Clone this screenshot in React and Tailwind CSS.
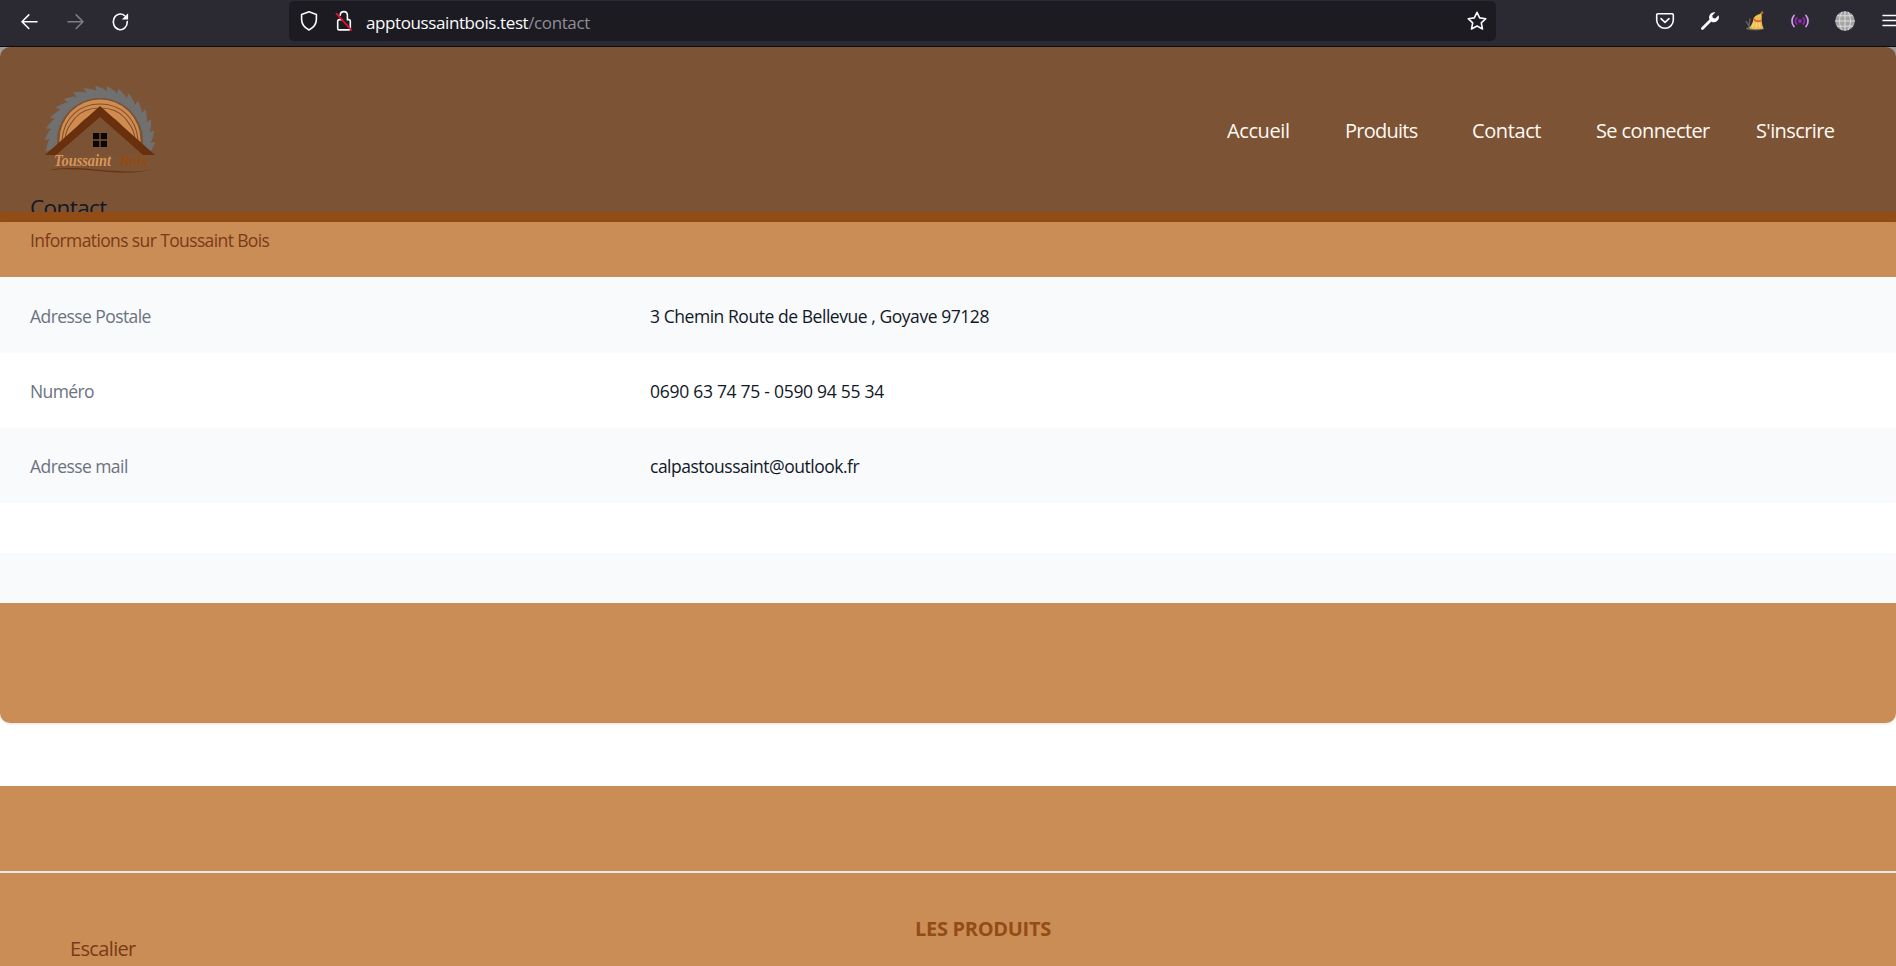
const font = "font-['Open_Sans','Noto_Sans',sans-serif]";

function BrowserBar() {
  return (
    <div className="flex h-[47px] shrink-0 items-start overflow-hidden border-b border-[#0c0c0d] bg-[#2b2a33]">
      <div className="flex w-[289px] shrink-0 items-center gap-[25px] pt-[12px] pl-[20px]">
        <svg width="20" height="20" viewBox="0 0 20 20" fill="none" stroke="#fbfbfe" strokeWidth="1.6" strokeLinecap="round" strokeLinejoin="round"><path d="M17.500 9.700h-15M9.300 2.900 2.500 9.700l6.800 6.800" transform="translate(-0.500 0)" /></svg>
        <svg width="20" height="20" viewBox="0 0 20 20" fill="none" stroke="#7f7e84" strokeWidth="1.6" strokeLinecap="round" strokeLinejoin="round"><path d="M11.200 2.900 18 9.700l-6.800 6.800M18 9.700H3" /></svg>
        <svg width="20" height="20" viewBox="0 0 20 20" fill="none" stroke="#fbfbfe" strokeWidth="1.6" strokeLinecap="round"><path d="M14.600 3.700A7 7.800 0 1 0 17.300 9.600" /><path d="M18.100 1.200v6.300h-6.300z" fill="#fbfbfe" stroke="none" /></svg>
      </div>
      <div className="mt-px flex h-[40px] w-[1207px] shrink-0 items-center rounded-[5px] bg-[#1c1b22] pr-[9px] pl-[10px]">
        <svg width="20" height="22" viewBox="0 0 20 22" fill="none" stroke="#fbfbfe" strokeWidth="1.6" strokeLinejoin="round"><path d="M10 1.8 17.4 4.6v4.600c0 4.300-2.700 8.300-7.400 10.800C5.300 17.500 2.600 13.500 2.600 9.200V4.600z" /></svg>
        <svg className="ml-[15px]" width="20" height="22" viewBox="0 0 20 22" fill="none" stroke="#fbfbfe" strokeWidth="1.6" strokeLinecap="round"><path d="M6.200 5.200C6.600 .4 13.400 .4 13.400 5.600V9.600h1.300a1.600 1.600 0 0 1 1.600 1.600v7.200a1.500 1.500 0 0 1-1.500 1.500H5.200a1.500 1.500 0 0 1-1.500-1.500v-7.200A1.600 1.600 0 0 1 5.300 9.600h2.500" /><path d="M2.500 3.600 17.300 20" stroke="#e8112d" strokeWidth="1.800" /></svg>
        <span className="mt-[3px] ml-[12px] text-[17px] leading-[24px] tracking-[-0.4px] whitespace-nowrap text-[#fbfbfe]">apptoussaintbois.test<span className="text-[#8f8e95]">/contact</span></span>
        <svg className="ml-auto" width="20" height="20" viewBox="0 0 20 20" fill="none" stroke="#fbfbfe" strokeWidth="1.600" strokeLinejoin="round"><path d="M10 1.300l2.700 5.600 6.100.8-4.500 4.200 1.200 6.100-5.500-3-5.500 3 1.200-6.100L1.200 7.700l6.100-.8z" /></svg>
      </div>
      <div className="flex shrink-0 items-center gap-[25px] pt-[11px] pl-[159px]">
        <svg width="20" height="20" viewBox="0 0 20 20" fill="none" stroke="#fbfbfe" strokeWidth="1.600" strokeLinecap="round" strokeLinejoin="round"><path d="M2.800 2.800h14.400a1.100 1.100 0 0 1 1.100 1.100V9a8.300 8.300 0 0 1-16.600 0V3.900a1.100 1.100 0 0 1 1.100-1.100zM6 7.600l4 3.800 4-3.800" /></svg>
        <svg width="20" height="20" viewBox="0 0 20 20"><path d="M2.400 17.500 11.400 8.500" stroke="#fbfbfe" strokeWidth="2.800" strokeLinecap="round" /><path d="M14.600 1.200a5.300 5.300 0 0 0-5.200 7.100l2.500 2.700a5.300 5.300 0 0 0 6.700-6.800l-3.300 3.200-2.500-.5-.5-2.500 3.200-3.100z" fill="#fbfbfe" /></svg>
        <svg width="20" height="20" viewBox="0 0 20 20"><ellipse cx="10" cy="17.500" rx="9" ry="1.800" fill="#6b6963" /><path d="M1 10l4 7M5 7.500 4 16" stroke="#59645b" strokeWidth="1.500" /><path d="M17.800.6 14.500 5" stroke="#b97a22" strokeWidth="2" /><path d="M16 2.800c-3 .2-6 2-7.500 4.700C8 11.500 6.500 14.500 4 17c4 1.600 10 1.500 14.500.5-1.700-4-2.200-8-1.700-12.500z" fill="#f0bd4f" /><path d="M8.500 8c2 2.300 4.800 2.800 7.800 1.500" stroke="#e5533c" strokeWidth="1.700" fill="none" /><path d="M9 12l-1.500 4M11.500 12v4M14 12l1 4" stroke="#fbe08b" strokeWidth="1" /></svg>
        <svg width="20" height="20" viewBox="0 0 20 20" fill="none" strokeWidth="1.700" strokeLinecap="round"><circle cx="10" cy="10" r="1.900" fill="#a31fc0" /><path d="M6.700 7a4.600 4.600 0 0 0 0 6M13.300 7a4.600 4.600 0 0 1 0 6" stroke="#8e2bb0" /><path d="M4 4.500a8.500 8.500 0 0 0 0 11M16 4.500a8.500 8.500 0 0 1 0 11" stroke="#d79aea" /></svg>
        <svg width="20" height="20" viewBox="0 0 20 20"><circle cx="10" cy="10" r="9.800" fill="#a3a3a3" /><path d="M10 0v20M0 10h20M2 4.800h16M2 15.200h16M7 .8C3.800 6 3.800 14 7 19.200M13 .8c3.200 5.200 3.200 13.200 0 18.400" fill="none" stroke="#dedede" strokeWidth="1" /></svg>
        <svg className="ml-[2px]" width="20" height="20" viewBox="0 0 20 20" stroke="#fbfbfe" strokeWidth="1.500" strokeLinecap="round"><path d="M1 4.500h18M1 9.500h18M1 14.500h18" /></svg>
      </div>
    </div>
  );
}

const teeth = Array.from({ length: 17 }, (_, i) => {
  const point = (deg, r) => {
    const a = (deg * Math.PI) / 180;
    return `${(55 + r * Math.cos(a)).toFixed(1)},${(55 - r * Math.sin(a)).toFixed(1)}`;
  };
  const start = 190 - i * 12;
  return `${point(start, 50)} ${point(start + 1, 55.5)} ${point(start - 3, 54)} ${point(start - 9, 52)}`;
}).join(" ");

function Logo() {
  return (
    <svg className="overflow-visible" width="112" height="92" viewBox="0 -2 112 92">
      <polygon points={`${teeth} 103,64 55,35 7,64`} fill="#707070" />
      <path d="M12 55a43 43 0 0 1 86 0v6L55 26 12 61z" fill="#7b5233" />
      <path d="M14.500 57V54a40.500 40.500 0 0 1 81 0v3L55 22z" fill="#d08c50" />
      <g fill="none" stroke="#82502b" strokeWidth="1.100">
        <path d="M17 54C19 31 35 18 55 18s36 13 38 36" />
        <path d="M20 53c1-11 6-15 10-21 7-8 15-10 25-10s18 2 25 10c4 6 9 10 10 21" />
        <path d="M32 42c5-7 12-12 21-15M78 42c-5-7-12-12-21-15" />
      </g>
      <path d="M55 29 11 69h87z" fill="#7b5233" />
      <path d="M55 20 0 69h11l44-38 43 38h12z" fill="#69300e" />
      <path d="M48 47h6.300v6.300H48zM55.700 47H62v6.300h-6.300zM48 54.700h6.300V61H48zM55.700 54.700H62V61h-6.300z" fill="#080706" />
      <text x="9" y="80" textLength="57" lengthAdjust="spacingAndGlyphs" className="font-['Liberation_Serif',serif] text-[17px] font-bold italic" fill="#d9955a">Toussaint</text>
      <text x="75" y="80" textLength="27" lengthAdjust="spacingAndGlyphs" className="font-['Liberation_Serif',serif] text-[17px] font-bold italic" fill="#934b12">Bois</text>
      <path d="M3 84.500c18-5 43-1 60 0 17 1 30 2 43-1-14 4-29 3.500-43 2.500-20-2-42-4-60-1.500z" fill="#69350f" />
    </svg>
  );
}

const links = [
  ["Accueil", "w-[118px]", "tracking-[-0.4px]"],
  ["Produits", "w-[127px]", "tracking-[-0.75px]"],
  ["Contact", "w-[124px]", "tracking-[-0.4px]"],
  ["Se connecter", "w-[160px]", "tracking-[-0.6px]"],
  ["S'inscrire", "w-[79px]", "tracking-[-0.6px]"],
];

function Header() {
  return (
    <header className="flex h-[175px] flex-col overflow-hidden rounded-t-[10px] border-b-[10px] border-[#924c15] bg-[#7c5334]">
      <div className="flex h-[146px] shrink-0 items-start justify-between pt-[37px] pl-[45px]">
        <Logo />
        <nav className="mt-[31px] flex w-[669px] text-[20px] leading-[32px] whitespace-nowrap text-[#fffaf5]">
          {links.map(([label, width, tracking]) => (
            <a key={label} className={`${width} ${tracking} shrink-0`}>{label}</a>
          ))}
        </nav>
      </div>
      <h3 className="ml-[30px] text-[22.500px] leading-[30px] tracking-[-0.6px] text-[#111827]">Contact</h3>
    </header>
  );
}

const rows = [
  ["Adresse Postale", "3 Chemin Route de Bellevue , Goyave 97128", "bg-[#f9fafb] h-[76px] pt-[27px]", "tracking-[-0.57px]", "tracking-[-0.45px]"],
  ["Numéro", "0690 63 74 75 - 0590 94 55 34", "bg-white h-[75px] pt-[26px]", "tracking-[-0.6px]", "tracking-[-0.28px]"],
  ["Adresse mail", "calpastoussaint@outlook.fr", "bg-[#f9fafb] h-[75px] pt-[26px]", "tracking-[-0.57px]", "tracking-[-0.5px]"],
  ["", "", "bg-white h-[50px]", "", ""],
  ["", "", "bg-[#f9fafb] h-[50px]", "", ""],
];

export default function App() {
  return (
    <div className={`${font} flex h-[966px] w-[1896px] flex-col overflow-hidden bg-white`}>
      <BrowserBar />
      <div className="shrink-0 bg-[#9b9b9b]">
        <Header />
      </div>
      <section className="h-[501px] shrink-0 overflow-hidden rounded-b-[10px] bg-[#cb8d56] shadow-sm">
        <p className="h-[55px] pt-[6px] pl-[30px] text-[17.500px] leading-[25px] tracking-[-0.62px] text-[#783b16]">Informations sur Toussaint Bois</p>
        <dl>
          {rows.map(([label, value, row, labelTracking, valueTracking], i) => (
            <div key={i} className={`${row} flex pl-[30px] text-[17.500px] leading-[25px]`}>
              <dt className={`${labelTracking} w-[620px] text-[#6b7280]`}>{label}</dt>
              <dd className={`${valueTracking} text-[#111827]`}>{value}</dd>
            </div>
          ))}
        </dl>
      </section>
      <footer className="mt-[63px] grow bg-[#cb8d56]">
        <div className="h-[87px] border-b-2 border-[#e5e7eb]" />
        <div className="flex items-start">
          <a className="w-[845px] pt-[60px] pl-[70px] text-[20px] leading-[32px] tracking-[-0.65px] text-[#783b16]">Escalier</a>
          <h2 className="pt-[40px] pl-[70px] text-[20px] leading-[32px] font-bold tracking-[-0.3px] text-[#924c15]">LES PRODUITS</h2>
        </div>
      </footer>
    </div>
  );
}
